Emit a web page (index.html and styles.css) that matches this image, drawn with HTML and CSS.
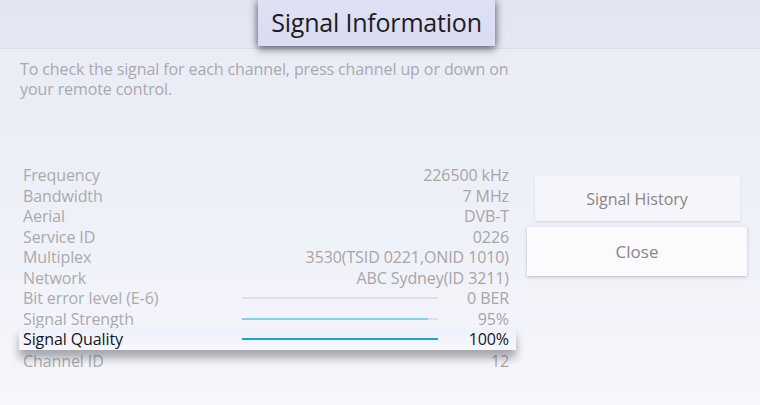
FILE: index.html
```html
<!DOCTYPE html>
<html>
<head>
<meta charset="utf-8">
<link rel="stylesheet" href="styles.css">
</head>
<body>
<div class="screen">
  <header class="topband">
    <h1 class="title">Signal Information</h1>
  </header>
  <p class="desc">To check the signal for each channel, press channel up or down on your remote control.</p>
  <div class="content">
    <div class="table">
      <div class="row"><span class="lbl">Frequency</span><span class="val wide">226500 kHz</span></div>
      <div class="row"><span class="lbl">Bandwidth</span><span class="val wide">7 MHz</span></div>
      <div class="row"><span class="lbl">Aerial</span><span class="val wide">DVB-T</span></div>
      <div class="row"><span class="lbl">Service ID</span><span class="val wide">0226</span></div>
      <div class="row"><span class="lbl">Multiplex</span><span class="val wide">3530(TSID 0221,ONID 1010)</span></div>
      <div class="row"><span class="lbl">Network</span><span class="val wide">ABC Sydney(ID 3211)</span></div>
      <div class="row"><span class="lbl">Bit error level (E-6)</span><span class="bar"><span class="fill ber" style="width:0%"></span></span><span class="val">0 BER</span></div>
      <div class="row"><span class="lbl">Signal Strength</span><span class="bar"><span class="fill strength" style="width:95%"></span></span><span class="val">95%</span></div>
      <div class="row active"><span class="lbl">Signal Quality</span><span class="bar"><span class="fill quality" style="width:100%"></span></span><span class="val">100%</span></div>
      <div class="row"><span class="lbl">Channel ID</span><span class="val wide">12</span></div>
    </div>
    <div class="actions">
      <button class="btn history">Signal History</button>
      <button class="btn close">Close</button>
    </div>
  </div>
</div>
</body>
</html>
```
FILE: styles.css
```css
html, body {
  margin: 0;
  padding: 0;
}
body {
  width: 760px;
  height: 405px;
  overflow: hidden;
  font-family: "Open Sans", "Noto Sans", sans-serif;
}
.screen {
  width: 760px;
  height: 405px;
  background: linear-gradient(180deg, #e9ebf5 0%, #eef0f8 50%, #f6f7fc 100%);
}
.topband {
  height: 48px;
  background: linear-gradient(180deg, #e2e4ef 0%, #e5e7f2 100%);
  border-bottom: 1px solid #dcdee9;
  display: flex;
}
.title {
  margin: 0 0 0 258px;
  width: 237px;
  height: 46px;
  box-sizing: border-box;
  background: linear-gradient(180deg, #dfe1f4 0%, #d9dcf2 100%);
  box-shadow: 0 4px 7px rgba(60, 60, 70, 0.55), 3px 0 6px rgba(60,60,70,0.25), -3px 0 6px rgba(60,60,70,0.25);
  font-weight: 400;
  font-size: 25px;
  line-height: 44px;
  color: #1e1c22;
  text-align: center;
  letter-spacing: -0.2px;
  position: relative;
  z-index: 2;
}
.desc {
  margin: 10px 0 0 20px;
  width: 500px;
  font-size: 16px;
  line-height: 20px;
  color: #a9a9ad;
  letter-spacing: -0.1px;
}
.content {
  margin-top: 65px;
  display: flex;
  align-items: flex-start;
}
.table {
  margin-left: 19px;
  width: 497px;
  display: flex;
  flex-direction: column;
}
.row {
  display: grid;
  grid-template-columns: 219px 196px 1fr;
  align-items: center;
  height: 20.5px;
  padding: 0 7px 0 4px;
  font-size: 16px;
  color: #aaaaac;
  letter-spacing: -0.1px;
  white-space: nowrap;
}
.val {
  text-align: right;
  color: #a8a5a5;
}
.val.wide {
  grid-column: 2 / 4;
}
.bar {
  height: 2px;
  background: #dfe0e8;
  display: flex;
}
.fill {
  height: 2px;
}
.strength { background: #7fd3ea; }
.quality { background: #1ba5d6; }
.row.active {
  height: 22px;
  background: linear-gradient(180deg, #eef0fb 0%, #f7f8fd 100%);
  color: #15141a;
  box-shadow: 0 8px 9px rgba(70, 70, 80, 0.45);
  position: relative;
  z-index: 1;
}
.row.active .val { color: #15141a; }
.row.active .bar { background: transparent; }
.actions {
  margin-left: 11px;
  margin-top: 12px;
  display: flex;
  flex-direction: column;
  align-items: center;
  gap: 6px;
  width: 220px;
}
.btn {
  border: none;
  font-family: "Open Sans", "Noto Sans", sans-serif;
  font-size: 16px;
  color: #8d8384;
  padding: 0;
}
.history {
  width: 205px;
  height: 45px;
  background: #f5f6fb;
  box-shadow: 0 1px 2px rgba(150, 150, 170, 0.3);
}
.close {
  width: 220px;
  height: 49px;
  background: #fbfbfe;
  font-size: 17px;
  box-shadow: 0 1px 3px rgba(120, 120, 140, 0.45);
}
```
